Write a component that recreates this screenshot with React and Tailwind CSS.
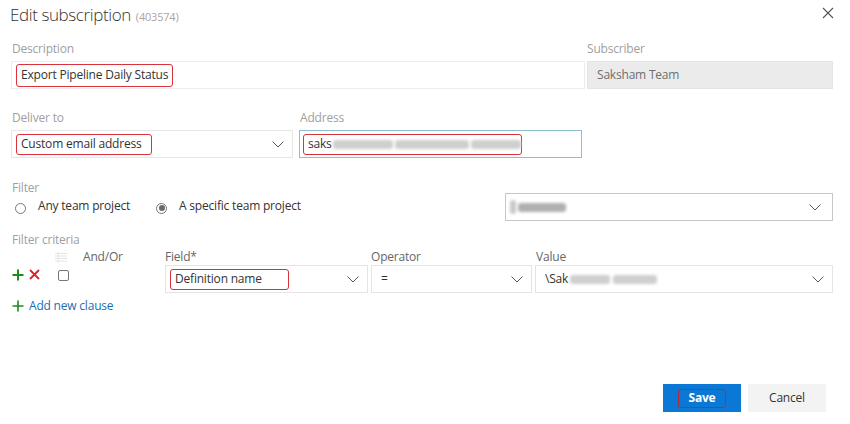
import React from "react";

const Chevron = () => (
  <svg width="12" height="7" viewBox="0 0 12 7" className="shrink-0">
    <path d="M0.5 0.5 L6 6 L11.5 0.5" fill="none" stroke="#555" strokeWidth="1" />
  </svg>
);

const RedBox = ({ children, className = "" }) => (
  <span className={"inline-flex items-center rounded-[3px] border-[1.5px] border-[#d8323c] " + className}>
    {children}
  </span>
);

const Label = ({ children, className = "" }) => (
  <div className={"text-[12px] leading-[16px] text-[#a0a0a0] " + className}>{children}</div>
);

const Blur = ({ w, dark }) => (
  <span
    className={"inline-block h-[9px] rounded-[3px] blur-[1.5px] " + (dark ? "bg-[#b0b0b0]" : "bg-[#cfcfcf]")}
    style={{ width: w }}
  />
);

export default function App() {
  return (
    <div
      className="w-[850px] h-[424px] bg-white text-[#333] flex flex-col relative overflow-hidden tracking-[-0.2px]"
      style={{ fontFamily: '"Open Sans", "Noto Sans", sans-serif' }}
    >
      {/* Header */}
      <div className="flex items-start justify-between pl-[10px] pr-[16px] pt-[3px]">
        <div className="flex items-baseline gap-[5px]">
          <span className="text-[17px] leading-[24px] font-light text-[#333] tracking-[-0.4px]">Edit subscription</span>
          <span className="text-[11px] text-[#a6a6a6]">(403574)</span>
        </div>
        <svg width="12" height="12" viewBox="0 0 12 12" className="mt-[4px]">
          <path d="M1 1 L11 11 M11 1 L1 11" stroke="#555" strokeWidth="1.1" />
        </svg>
      </div>

      {/* Description / Subscriber */}
      <div className="grid grid-cols-[574px_246px] gap-x-[2px] pl-[11px] mt-[14px]">
        <Label className="pl-[1px]">Description</Label>
        <Label>Subscriber</Label>
        <div className="h-[28px] mt-[4px] border border-[#ececec] flex items-center pl-[4px]">
          <RedBox className="h-[23px] px-[4px] text-[12px]">Export Pipeline Daily Status</RedBox>
        </div>
        <div className="h-[28px] mt-[4px] bg-[#ebebeb] border border-[#e4e4e4] flex items-center pl-[9px] text-[12px] text-[#6f6f6f]">
          Saksham Team
        </div>
      </div>

      {/* Deliver to / Address */}
      <div className="grid grid-cols-[282px_283px] gap-x-[6px] pl-[11px] mt-[21px]">
        <Label className="pl-[1px]">Deliver to</Label>
        <Label className="pl-[1px]">Address</Label>
        <div className="h-[28px] mt-[4px] border border-[#e6e6e6] flex items-center justify-between pl-[4px] pr-[8px]">
          <RedBox className="h-[21px] pl-[4px] pr-[10px] text-[12px]">Custom email address</RedBox>
          <Chevron />
        </div>
        <div className="h-[28px] mt-[4px] border border-[#8cbfcf] flex items-center pl-[3px]">
          <RedBox className="h-[21px] pl-[4px] pr-[10px] text-[12px] w-[219px]">
            saks
            <span className="ml-[1px] flex-1 flex items-center gap-[2px]">
              <Blur w={60} />
              <Blur w={74} />
              <Blur w={50} />
            </span>
            <span className="w-px h-[13px] bg-[#666] ml-[1px]" />
          </RedBox>
        </div>
      </div>

      {/* Filter */}
      <div className="pl-[11px] mt-[22px]">
        <Label className="pl-[1px]">Filter</Label>
        <div className="flex items-center justify-between pr-[17px] -mt-[3px]">
          <div className="flex items-center text-[12px] text-[#333] -mt-[3px]">
            <span className="ml-[4px] w-[11px] h-[11px] rounded-full border border-[#777] mt-[5px]" />
            <span className="ml-[12px]">Any team project</span>
            <span className="ml-[26px] w-[11px] h-[11px] rounded-full border border-[#777] flex items-center justify-center mt-[5px]">
              <span className="w-[6px] h-[6px] rounded-full bg-[#6a6a6a]" />
            </span>
            <span className="ml-[12px]">A specific team project</span>
          </div>
          <div className="w-[328px] h-[28px] border border-[#c6c6c6] flex items-center justify-between pl-[4px] pr-[11px]">
            <span className="flex items-center gap-[2px]">
              <span className="w-[6px] h-[14px] rounded-full bg-[#c8c8c8] blur-[1.5px]" />
              <Blur w={48} dark />
            </span>
            <Chevron />
          </div>
        </div>
      </div>

      {/* Filter criteria */}
      <div className="pl-[11px] mt-[11px]">
        <Label className="pl-[1px]">Filter criteria</Label>
        <div className="grid grid-cols-[151px_203px_161px_298px] gap-x-[3px] mt-[1px]">
          {/* header row */}
          <div className="flex items-center h-[16px] text-[12px] text-[#666]">
            <svg width="12" height="11" viewBox="0 0 12 11" className="ml-[44px]">
              <path d="M0 1.5 H12 M0 4 H12 M0 6.5 H12 M0 9 H12 M3 0 V11" stroke="#e4e4e4" strokeWidth="1" fill="none" />
            </svg>
            <span className="ml-[16px]">And/Or</span>
          </div>
          <div className="h-[16px] text-[12px] text-[#666] leading-[16px]">Field*</div>
          <div className="h-[16px] text-[12px] text-[#666] leading-[16px]">Operator</div>
          <div className="h-[16px] text-[12px] text-[#666] leading-[16px] pl-[1px]">Value</div>

          {/* data row */}
          <div className="flex items-start h-[28px]">
            <svg width="12" height="12" viewBox="0 0 12 12" className="ml-[1px] mt-[4px]">
              <path d="M6 0.5 V11.5 M0.5 6 H11.5" stroke="#1c8a1c" strokeWidth="2" />
            </svg>
            <svg width="11" height="11" viewBox="0 0 11 11" className="ml-[5px] mt-[4px]">
              <path d="M1 1 L10 10 M10 1 L1 10" stroke="#e0202a" strokeWidth="1.8" />
            </svg>
            <span className="ml-[18px] mt-[5px] w-[11px] h-[11px] border border-[#777] rounded-[2px]" />
          </div>
          <div className="h-[28px] border border-[#e4e4e4] flex items-center justify-between pl-[4px] pr-[8px]">
            <RedBox className="h-[21px] pl-[4px] pr-[26px] text-[12px]">Definition name</RedBox>
            <Chevron />
          </div>
          <div className="h-[28px] border border-[#e4e4e4] flex items-center justify-between pl-[9px] pr-[8px]">
            <span className="text-[12px]">=</span>
            <Chevron />
          </div>
          <div className="h-[28px] border border-[#e4e4e4] flex items-center justify-between pl-[9px] pr-[8px]">
            <span className="flex items-center text-[12px]">
              \Sak
              <span className="ml-[2px] flex items-center gap-[3px]">
                <Blur w={40} />
                <Blur w={44} />
              </span>
            </span>
            <Chevron />
          </div>
        </div>

        <div className="flex items-center mt-[5px] h-[16px]">
          <svg width="12" height="12" viewBox="0 0 12 12" className="ml-[1px]">
            <path d="M6 0.5 V11.5 M0.5 6 H11.5" stroke="#1c8a1c" strokeWidth="1.6" />
          </svg>
          <span className="ml-[5px] text-[12px] text-[#1a6fb3]">Add new clause</span>
        </div>
      </div>

      {/* Footer buttons */}
      <div className="flex justify-end gap-[7px] pr-[24px] mt-auto mb-[12px]">
        <button className="w-[78px] h-[28px] bg-[#0a78d4] flex items-center justify-center">
          <span className="w-[48px] h-[19px] rounded-[3px] border-[1.5px] border-[#b8283a] flex items-center justify-center text-[12px] font-bold text-white">
            Save
          </span>
        </button>
        <button className="w-[78px] h-[28px] bg-[#f3f3f3] text-[12px] text-[#333]">Cancel</button>
      </div>
    </div>
  );
}
